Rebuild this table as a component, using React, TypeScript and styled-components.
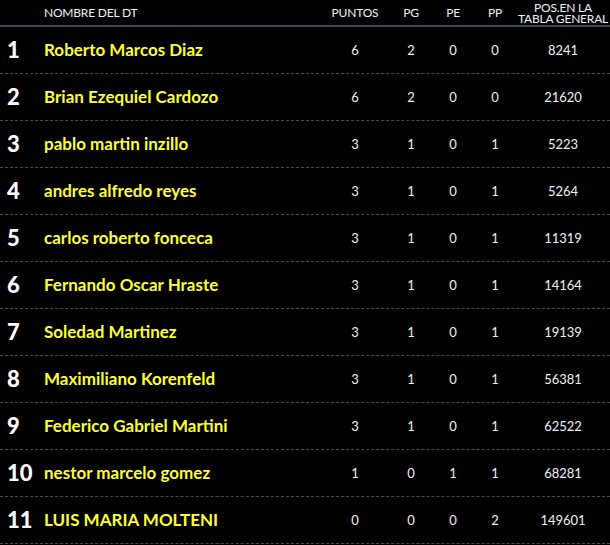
import styled, { createGlobalStyle } from 'styled-components';

const GlobalStyle = createGlobalStyle`
  html, body {
    margin: 0;
    padding: 0;
    background: #000;
  }
  body {
    font-family: Lato, "Open Sans", "Liberation Sans", sans-serif;
    color: #fff;
  }
`;

const COLUMNS = '44px 276px 70px 42px 42px 42px 94px';

interface Coach {
  name: string;
  puntos: number;
  pg: number;
  pe: number;
  pp: number;
  pos: number;
}

const coaches: Coach[] = [
  { name: 'Roberto Marcos Diaz', puntos: 6, pg: 2, pe: 0, pp: 0, pos: 8241 },
  { name: 'Brian Ezequiel Cardozo', puntos: 6, pg: 2, pe: 0, pp: 0, pos: 21620 },
  { name: 'pablo martin inzillo', puntos: 3, pg: 1, pe: 0, pp: 1, pos: 5223 },
  { name: 'andres alfredo reyes', puntos: 3, pg: 1, pe: 0, pp: 1, pos: 5264 },
  { name: 'carlos roberto fonceca', puntos: 3, pg: 1, pe: 0, pp: 1, pos: 11319 },
  { name: 'Fernando Oscar Hraste', puntos: 3, pg: 1, pe: 0, pp: 1, pos: 14164 },
  { name: 'Soledad Martinez', puntos: 3, pg: 1, pe: 0, pp: 1, pos: 19139 },
  { name: 'Maximiliano Korenfeld', puntos: 3, pg: 1, pe: 0, pp: 1, pos: 56381 },
  { name: 'Federico Gabriel Martini', puntos: 3, pg: 1, pe: 0, pp: 1, pos: 62522 },
  { name: 'nestor marcelo gomez', puntos: 1, pg: 0, pe: 1, pp: 1, pos: 68281 },
  { name: 'LUIS MARIA MOLTENI', puntos: 0, pg: 0, pe: 0, pp: 2, pos: 149601 },
];

const Table = styled.div`
  width: 610px;
  background: #000;
`;

const HeaderRow = styled.div`
  display: grid;
  grid-template-columns: ${COLUMNS};
  align-items: center;
  height: 25px;
  border-bottom: 2px solid #34495a;
`;

const HeadCell = styled.div<{ $left?: boolean }>`
  font-size: 12px;
  font-weight: 400;
  text-transform: uppercase;
  color: #eef3f6;
  line-height: 11px;
  text-align: ${(p) => (p.$left ? 'left' : 'center')};
  letter-spacing: -0.2px;
  white-space: nowrap;
`;

const Row = styled.div`
  display: grid;
  grid-template-columns: ${COLUMNS};
  align-items: center;
  height: 46px;
  border-bottom: 1px dashed #3a4f5e;
`;

const Rank = styled.div`
  padding-left: 7px;
  font-size: 22px;
  font-weight: 900;
  color: #fff;
  margin-top: -1px;
`;

const Name = styled.div`
  font-size: 17px;
  font-weight: 700;
  color: #ffff33;
  white-space: nowrap;
  margin-top: -2px;
`;

const Value = styled.div`
  font-size: 13px;
  color: #f2f2f2;
  text-align: center;
  margin-top: -1px;
`;

export default function App() {
  return (
    <>
      <GlobalStyle />
      <Table>
        <HeaderRow>
          <div />
          <HeadCell $left>Nombre del DT</HeadCell>
          <HeadCell>Puntos</HeadCell>
          <HeadCell>PG</HeadCell>
          <HeadCell>PE</HeadCell>
          <HeadCell>PP</HeadCell>
          <HeadCell>
            Pos.en la
            <br />
            Tabla general
          </HeadCell>
        </HeaderRow>
        {coaches.map((c, i) => (
          <Row key={c.name}>
            <Rank>{i + 1}</Rank>
            <Name>{c.name}</Name>
            <Value>{c.puntos}</Value>
            <Value>{c.pg}</Value>
            <Value>{c.pe}</Value>
            <Value>{c.pp}</Value>
            <Value>{c.pos}</Value>
          </Row>
        ))}
      </Table>
    </>
  );
}
